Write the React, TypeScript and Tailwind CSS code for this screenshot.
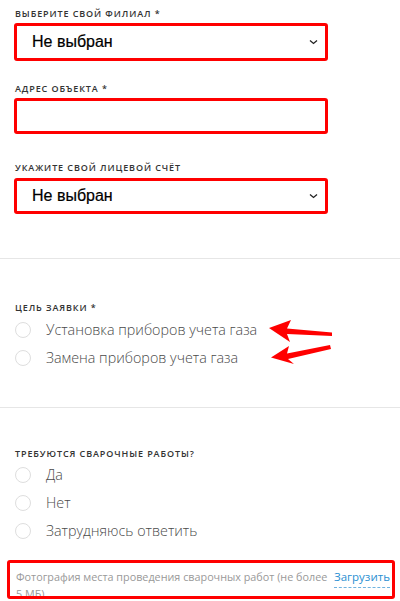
import React from "react";

const labelCls =
  "block text-[9px] leading-[12px] font-semibold uppercase tracking-[0.9px] text-[#333] font-['Open_Sans',sans-serif]";

function Chevron() {
  return (
    <svg width="9" height="6" viewBox="0 0 9 6" className="shrink-0">
      <polyline points="1,1.5 4.5,4.5 8,1.5" fill="none" stroke="#222" strokeWidth="1.3" />
    </svg>
  );
}

function Radio({ label }: { label: string }) {
  return (
    <div className="flex h-[28px] items-center">
      <span className="h-[16px] w-[16px] shrink-0 rounded-full border border-[#dedede] bg-white" />
      <span className="ml-[15px] text-[14.3px] font-light text-[#4a4a4a] font-['Open_Sans',sans-serif]">{label}</span>
    </div>
  );
}

export default function App() {
  return (
    <div className="relative h-[601px] w-[400px] overflow-hidden bg-white">
      <div className="px-[14px] pt-[8px]">
        <span className={labelCls + " pl-[1px]"}>Выберите свой филиал *</span>
        <div className="mt-[3px] flex h-[38px] w-[314px] items-center justify-between rounded-[3px] border-[3px] border-[#ff0000] bg-white pl-[15px] pr-[7px]">
          <span className="text-[16px] text-black font-['Liberation_Sans',sans-serif] [-webkit-text-stroke:0.2px_#000]">Не выбран</span>
          <Chevron />
        </div>

        <span className={labelCls + " mt-[22px] pl-[1px]"}>Адрес объекта *</span>
        <div className="mt-[3px] h-[36px] w-[314px] rounded-[3px] border-[3px] border-[#ff0000] bg-white" />

        <span className={labelCls + " mt-[28px] pl-[1px]"}>Укажите свой лицевой счёт</span>
        <div className="mt-[4px] flex h-[36px] w-[314px] items-center justify-between rounded-[3px] border-[3px] border-[#ff0000] bg-white pl-[15px] pr-[7px]">
          <span className="text-[16px] text-black font-['Liberation_Sans',sans-serif] [-webkit-text-stroke:0.2px_#000]">Не выбран</span>
          <Chevron />
        </div>
      </div>

      <div className="mt-[44px] h-px w-full bg-[#e6e6e6]" />

      <div className="px-[15px] pt-[43px]">
        <span className={labelCls}>Цель заявки *</span>
        <div className="mt-[2px] flex flex-col">
          <Radio label="Установка приборов учета газа" />
          <Radio label="Замена приборов учета газа" />
        </div>
      </div>

      <div className="mt-[35px] h-px w-full bg-[#e6e6e6]" />

      <div className="px-[15px] pt-[40px]">
        <span className={labelCls}>Требуются сварочные работы?</span>
        <div className="mt-[1px] flex flex-col">
          <Radio label="Да" />
          <Radio label="Нет" />
          <Radio label="Затрудняюсь ответить" />
        </div>
      </div>

      <div className="ml-[7px] mt-[15px] flex h-[39px] w-[388px] items-start justify-between overflow-hidden rounded-[3px] border-[3px] border-[#ff0000] bg-white pl-[6px] pr-[3px] pt-[5px]">
        <span className="w-[318px] shrink-0 text-[10.8px] leading-[17px] text-[#999] font-['Open_Sans',sans-serif]">
          Фотография места проведения сварочных работ (не более 5 МБ)
        </span>
        <span className="shrink-0 border-b border-dashed border-[#6fb3e0] pb-[2px] text-[11.5px] leading-[17px] text-[#2a8fd2] font-['Open_Sans',sans-serif]">
          Загрузить
        </span>
      </div>

      <svg className="pointer-events-none absolute left-0 top-0" width="400" height="601" viewBox="0 0 400 601">
        <path d="M269,328 L291,320 L287,328.5 L332,332.5 L332,336 L287,334 L290,342 Z" fill="#ff0000" />
        <path d="M271,357.5 L289,346 L287,353.5 L330,345 L331,349 L288,359 L294,364 Z" fill="#ff0000" />
      </svg>
    </div>
  );
}
